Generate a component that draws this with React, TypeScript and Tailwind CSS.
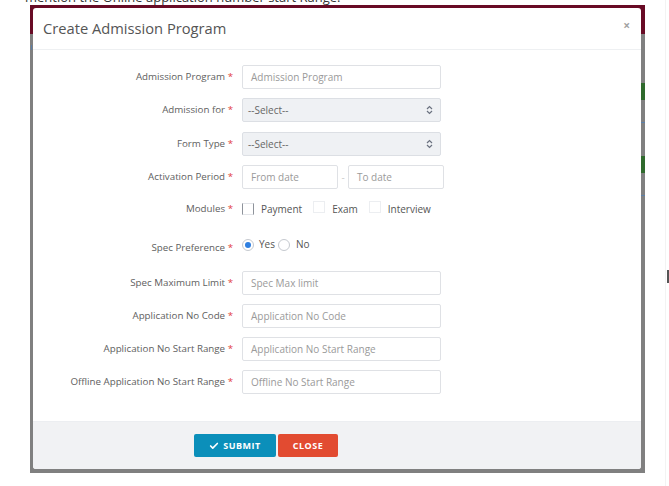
import { Check } from "lucide-react";

const font = { fontFamily: "'Open Sans', 'Liberation Sans', sans-serif" };

function Label({ text }: { text: string }) {
  return (
    <div className="text-right text-[9.75px] text-[#606060] pr-[9px] whitespace-nowrap">
      {text} <span className="text-[#e23b3b]">*</span>
    </div>
  );
}

function TextInput({ placeholder }: { placeholder: string }) {
  return (
    <div className="h-[24px] w-[199px] border border-[#dfe1e5] rounded-[2px] bg-white flex items-center pl-[8px] text-[10px] text-[#9a9a9a]">
      {placeholder}
    </div>
  );
}

function SelectBox() {
  return (
    <div className="h-[24px] w-[199px] border border-[#dcdfe4] rounded-[2px] bg-[#eff1f4] flex items-center justify-between pl-[5px] pr-[7px] text-[10px] text-[#666]">
      <span>--Select--</span>
      <svg width="7" height="10" viewBox="0 0 7 10" fill="none" stroke="#6b7280" strokeWidth="1.2">
        <path d="M1 4 L3.5 1.5 L6 4" />
        <path d="M1 6 L3.5 8.5 L6 6" />
      </svg>
    </div>
  );
}

function Row({ label, h, children }: { label: string; h: string; children: React.ReactNode }) {
  return (
    <div className={`grid grid-cols-[199px_1fr] items-center ${h}`}>
      <Label text={label} />
      <div>{children}</div>
    </div>
  );
}

function Box({ dark }: { dark?: boolean }) {
  return (
    <span
      className={`inline-block w-[12px] h-[12px] border ${dark ? "border-[#e3e5e9] border-l-[#8e939b] border-r-[#8e939b]" : "border-[#eceef1]"}`}
    />
  );
}

export default function App() {
  return (
    <div className="w-[669px] h-[486px] bg-white relative overflow-hidden" style={font}>
      <div className="h-[5px] overflow-hidden pl-[25px]">
        <div className="text-[13px] leading-[13px] -mt-[9px] text-[#333]">mention the Online application number start Range.</div>
      </div>
      <div className="relative ml-[30px] w-[615px] h-[468px] bg-[#808080]">
        <div className="h-[29px] bg-[#680b25]" />
        <div className="absolute right-0 top-[78px] w-[4px] h-[17px] bg-[#2f6a2d]" />
        <div className="absolute right-0 top-[117px] w-[4px] h-[1px] bg-[#5b7fa8]" />
        <div className="absolute right-0 top-[151px] w-[4px] h-[17px] bg-[#2f6a2d]" />
        <div className="absolute right-0 top-[190px] w-[4px] h-[1px] bg-[#5b7fa8]" />
        <div className="absolute left-[1px] top-[40px] w-[1px] h-[5px] bg-[#5b7fa8]" />

        <div className="absolute left-[3px] top-[3px] w-[608px] h-[461px] bg-white rounded-[3px] flex flex-col overflow-hidden">
          <div className="h-[42px] border-b border-[#eef0f2] flex items-center justify-between pl-[10px] pr-[11px]">
            <span className="text-[14.7px] text-[#555]">Create Admission Program</span>
            <span className="text-[12px] font-bold text-[#a3a3a3] -mt-[5px]">×</span>
          </div>
          <div className="flex-1 pt-[15px] px-[10px]">
            <Row label="Admission Program" h="h-[24px]">
              <TextInput placeholder="Admission Program" />
            </Row>
            <Row label="Admission for" h="h-[24px] mt-[9px]">
              <SelectBox />
            </Row>
            <Row label="Form Type" h="h-[24px] mt-[10px]">
              <SelectBox />
            </Row>
            <Row label="Activation Period" h="h-[24px] mt-[9px]">
              <div className="flex items-center">
                <div className="h-[24px] w-[96px] border border-[#dfe1e5] rounded-[2px] flex items-center pl-[8px] text-[10px] text-[#9a9a9a]">From date</div>
                <span className="w-[10px] text-center text-[10px] text-[#ccc]">-</span>
                <div className="h-[24px] w-[96px] border border-[#dfe1e5] rounded-[2px] flex items-center pl-[8px] text-[10px] text-[#9a9a9a]">To date</div>
              </div>
            </Row>
            <Row label="Modules" h="h-[20px] mt-[10px]">
              <div className="flex items-center text-[10px] text-[#555]">
                <Box dark />
                <span className="ml-[7px]">Payment</span>
                <span className="ml-[11px]"><Box /></span>
                <span className="ml-[7px]">Exam</span>
                <span className="ml-[11px]"><Box /></span>
                <span className="ml-[7px]">Interview</span>
              </div>
            </Row>
            <Row label="Spec Preference" h="h-[20px] mt-[19px]">
              <div className="flex items-center text-[10px] text-[#555] -mt-[7px]">
                <span className="w-[12px] h-[12px] rounded-full border border-[#c5c9cf] flex items-center justify-center">
                  <span className="w-[6px] h-[6px] rounded-full bg-[#2f7fe0]" />
                </span>
                <span className="ml-[5px]">Yes</span>
                <span className="ml-[3px] w-[12px] h-[12px] rounded-full border border-[#c5c9cf]" />
                <span className="ml-[6px]">No</span>
              </div>
            </Row>
            <Row label="Spec Maximum Limit" h="h-[24px] mt-[13px]">
              <TextInput placeholder="Spec Max limit" />
            </Row>
            <Row label="Application No Code" h="h-[24px] mt-[9px]">
              <TextInput placeholder="Application No Code" />
            </Row>
            <Row label="Application No Start Range" h="h-[24px] mt-[9px]">
              <TextInput placeholder="Application No Start Range" />
            </Row>
            <Row label="Offline Application No Start Range" h="h-[24px] mt-[9px]">
              <TextInput placeholder="Offline No Start Range" />
            </Row>
          </div>
          <div className="h-[48px] bg-[#f1f2f4] border-t border-[#eceef1] flex items-center pl-[161px] gap-[2px]">
            <button className="h-[23px] w-[82px] bg-[#0b8fba] rounded-[2px] text-white text-[9px] font-bold tracking-[0.5px] flex items-center justify-center gap-[4px]">
              <Check size={10} strokeWidth={4} />
              SUBMIT
            </button>
            <button className="h-[23px] w-[60px] bg-[#e24b31] rounded-[2px] text-white text-[9px] font-bold tracking-[0.5px] flex items-center justify-center">
              CLOSE
            </button>
          </div>
        </div>
      </div>
      <div className="absolute left-[665px] top-0 w-[1px] h-[486px] bg-[#f3f3f3]" />
      <div className="absolute left-[667px] top-[270px] w-[2px] h-[13px] bg-[#555]" />
    </div>
  );
}
